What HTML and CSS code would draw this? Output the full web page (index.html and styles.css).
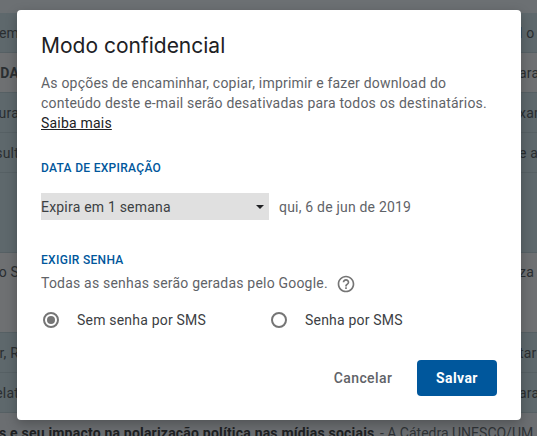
FILE: index.html
```html
<!DOCTYPE html>
<html lang="pt-BR">
<head>
<meta charset="utf-8">
<title>Modo confidencial</title>
<link rel="stylesheet" href="styles.css">
</head>
<body>
<div class="inbox">
  <div class="toolbar"></div>
  <div class="row"><span class="start"><span>em</span></span><span class="end">l o</span></div>
  <div class="row light"><span class="start strong"><span>IDA</span></span><span class="end">ara</span></div>
  <div class="row"><span class="start"><span>ura</span></span><span class="end">xam</span></div>
  <div class="row"><span class="start"><span>sult</span></span><span class="end">e al</span></div>
  <div class="row blank"></div>
  <div class="row light tall"><span class="start"><span>o S</span></span><span class="end">za :</span></div>
  <div class="row"><span class="start"><span>r, R</span></span><span class="end">tar</span></div>
  <div class="row"><span class="start"><span>elat</span></span><span class="end">ara</span></div>
  <div class="row light last"><span class="subject">s e seu impacto na polarização política nas mídias sociais</span><span class="snippet"> - A Cátedra UNESCO/UM</span></div>
</div>

<section class="dialog">
  <h1 class="title">Modo confidencial</h1>
  <p class="intro">As opções de encaminhar, copiar, imprimir e fazer download do conteúdo deste e-mail serão desativadas para todos os destinatários. <a class="more" href="#">Saiba mais</a></p>

  <h2 class="label expiry-label">DATA DE EXPIRAÇÃO</h2>
  <div class="expiry">
    <div class="select"><span>Expira em 1 semana</span><i class="caret"></i></div>
    <span class="date">qui, 6 de jun de 2019</span>
  </div>

  <h2 class="label password-label">EXIGIR SENHA</h2>
  <div class="hint">
    <span>Todas as senhas serão geradas pelo Google.</span>
    <svg class="help" viewBox="0 0 24 24" width="20" height="20" aria-hidden="true"><path fill="#757575" d="M11 18h2v-2h-2v2zm1-16C6.48 2 2 6.48 2 12s4.48 10 10 10 10-4.480 10-10S17.520 2 12 2zm0 18c-4.410 0-8-3.590-8-8s3.590-8 8-8 8 3.590 8 8-3.590 8-8 8zm0-14c-2.210 0-4 1.790-4 4h2c0-1.100.9-2 2-2s2 .9 2 2c0 2-3 1.750-3 5h2c0-2.250 3-2.500 3-5 0-2.210-1.790-4-4-4z"/></svg>
  </div>
  <div class="radios">
    <div class="radio-item first"><span class="radio checked"></span><span>Sem senha por SMS</span></div>
    <div class="radio-item"><span class="radio"></span><span>Senha por SMS</span></div>
  </div>

  <div class="actions">
    <button class="cancel" type="button">Cancelar</button>
    <button class="save" type="button">Salvar</button>
  </div>
</section>
</body>
</html>
```

FILE: styles.css
```css
* { box-sizing: border-box; }
html, body { margin: 0; height: 100%; }
body {
  overflow: hidden;
  position: relative;
  background: #5f686c;
  font-family: Roboto, "Liberation Sans", sans-serif;
}

.inbox { color: #2a2e31; font-size: 14px; letter-spacing: .2px; }
.toolbar { height: 13px; background: #6c7073; }
.row {
  height: 40px;
  display: flex;
  justify-content: space-between;
  align-items: center;
  background: #5e686c;
  border-bottom: 1px solid #566064;
  white-space: nowrap;
  overflow: hidden;
}
.row.light { background: #6e7072; }
.row.blank { height: 80px; }
.row.tall { height: 80px; align-items: flex-start; padding-top: 11px; }
.row.last {
  height: 23px;
  border: 0;
  justify-content: flex-start;
  align-items: flex-start;
  padding-top: 12px;
  background: #6b6e71;
  white-space: pre;
}
.start { width: 30px; display: flex; justify-content: flex-end; padding-right: 11px; overflow: hidden; }
.end { width: 30px; overflow: hidden; padding-left: 12px; }
.strong { font-weight: 700; }
.subject { font-weight: 700; color: #1d2022; margin-left: -1px; }
.snippet { color: #2f3336; letter-spacing: 0; margin-left: 2px; }

.dialog {
  position: absolute;
  left: 17px;
  top: 10px;
  width: 504px;
  height: 410px;
  padding: 24px;
  background: #fff;
  border-radius: 4px;
  box-shadow: 0 4px 12px rgba(0, 0, 0, .25);
  display: flex;
  flex-direction: column;
  font-size: 14px;
  letter-spacing: .2px;
  color: #5f6368;
}
.title {
  margin: 0;
  font-family: Inter, Roboto, sans-serif;
  font-weight: 400;
  font-size: 21px;
  line-height: 24px;
  letter-spacing: 0;
  color: #202124;
}
.intro { margin: 15px 0 0; line-height: 20px; width: 450px; }
.more { color: #202124; text-decoration: underline; }
.label {
  margin: 0;
  font-size: 12px;
  line-height: 16px;
  font-weight: 500;
  letter-spacing: .3px;
  color: #00579c;
}
.expiry-label { margin-top: 27px; }
.expiry { display: flex; align-items: center; margin-top: 17px; }
.select {
  width: 228px;
  height: 27px;
  background: #e0e0e0;
  color: #3c4043;
  display: flex;
  align-items: center;
  justify-content: space-between;
  padding-right: 5px;
}
.caret {
  width: 0;
  height: 0;
  border: 4.500px solid transparent;
  border-top: 4.500px solid #202124;
  border-bottom: 0;
}
.date { margin-left: 10px; }
.password-label { margin-top: 32px; }
.hint { display: flex; align-items: center; gap: 8px; margin-top: 5px; height: 20px; }
.help { flex: none; position: relative; top: 1px; }
.radios { display: flex; margin-top: 17px; color: #3c4043; }
.radio-item { display: flex; align-items: center; height: 20px; gap: 18px; padding-left: 2px; }
.radio-item.first { width: 228px; }
.radio {
  width: 16px;
  height: 16px;
  border: 2px solid #757575;
  border-radius: 50%;
  background: #fff;
  display: flex;
  align-items: center;
  justify-content: center;
}
.radio.checked::after {
  content: "";
  width: 8px;
  height: 8px;
  border-radius: 50%;
  background: #757575;
}
.actions { margin-top: auto; display: flex; justify-content: flex-end; align-items: center; }
.actions button {
  font: 500 14px Roboto, sans-serif;
  letter-spacing: .4px;
  border: 0;
  height: 36px;
  border-radius: 4px;
  padding: 0;
}
.cancel { background: none; color: #5f6368; width: 60px; margin-right: 24px; }
.save { background: #00579c; color: #fff; width: 80px; font-weight: 700 !important; }
```
